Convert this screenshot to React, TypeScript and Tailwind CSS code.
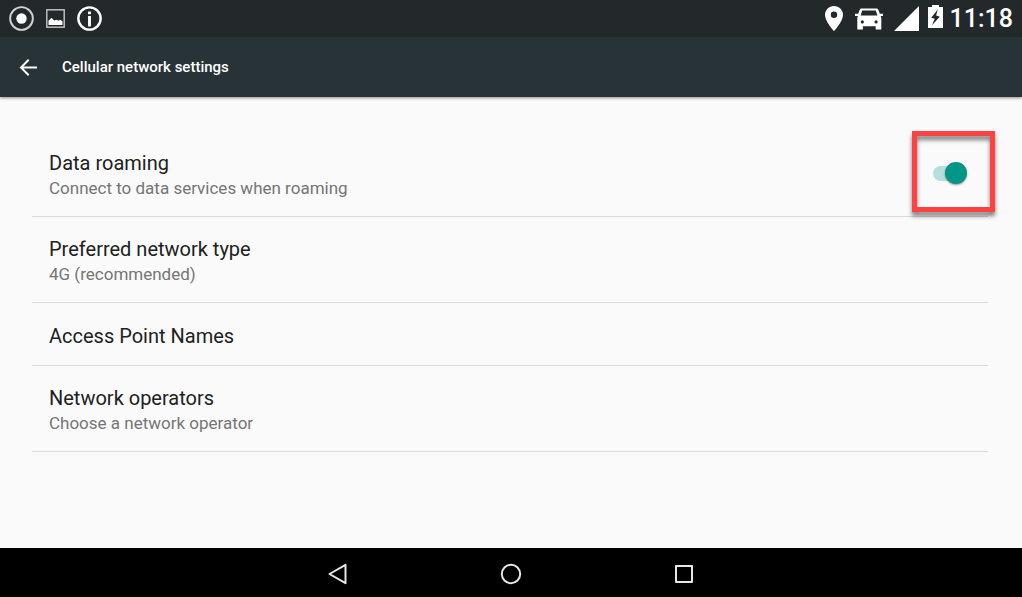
import { useState } from "react";

type Setting = {
  id: string;
  title: string;
  summary?: string;
};

const SETTINGS: Setting[] = [
  { id: "network-type", title: "Preferred network type", summary: "4G (recommended)" },
  { id: "apn", title: "Access Point Names" },
  { id: "operators", title: "Network operators", summary: "Choose a network operator" },
];

function StatusBar() {
  return (
    <div className="flex h-[37px] items-center justify-between bg-[#23282b] pr-[9px] pl-[9px] text-white">
      <div className="flex items-center gap-3">
        <svg viewBox="0 0 26 26" className="size-[25px]" fill="none" aria-hidden="true">
          <circle cx="13" cy="13" r="11.8" stroke="#d0d3d4" strokeWidth="2" />
          <circle cx="13" cy="13" r="5.4" fill="#fff" />
        </svg>
        <svg viewBox="0 0 19 19" className="size-[19px]" fill="none" aria-hidden="true">
          <rect x="0.8" y="0.8" width="17.4" height="17.4" stroke="#c5c8c9" strokeWidth="1.4" />
          <path d="M2.500 16v-4.200l3-3 2.700 2.800 2.500-.9 1.800 1.100 1.500-1 2.500 1.500V16z" fill="#fff" />
        </svg>
        <svg viewBox="0 0 26 26" className="size-[25px]" fill="none" aria-hidden="true">
          <circle cx="13" cy="13" r="11.6" stroke="#fff" strokeWidth="2.5" />
          <path d="M11.500 5.800h3v2.900h-3zM11.500 10.400h3v10.800h-3z" fill="#fff" />
        </svg>
      </div>

      <div className="flex items-center">
        <svg viewBox="0 0 18 25" className="mr-3 h-[25px] w-[18px]" fill="#fff" aria-hidden="true">
          <path
            fillRule="evenodd"
            d="M9 0C4 0 0 3.900 0 8.900 0 15.400 9 25 9 25s9-9.600 9-16.100C18 3.900 14 0 9 0zm0 12a3.200 3.200 0 1 1 0-6.400A3.200 3.200 0 0 1 9 12z"
          />
        </svg>
        <svg viewBox="0 0 28 22" className="mr-[11px] h-[22px] w-7" fill="#fff" aria-hidden="true">
          <path
            fillRule="evenodd"
            d="M6.400.5h15.200c.8 0 1.400.4 1.700 1.200l1.500 4.100H28v2.100h-2.300l.6 2.100v11.500h-5.600v-3.200H7.900v3.200H2.300V10l.6-2.100H0V5.800h3.200l1.500-4.100C5 .9 5.600.5 6.400.5zM7.200 2.600 5.600 7.600h16.800l-1.600-5zM7.300 12.300a1.600 1.600 0 1 0 0 3.200 1.600 1.600 0 0 0 0-3.200zm13.800 0a1.600 1.600 0 1 0 0 3.200 1.600 1.600 0 0 0 0-3.200z"
          />
        </svg>
        <svg viewBox="0 0 25 25" className="mr-[9px] size-[25px]" aria-hidden="true">
          <path d="M25 0v25H0z" fill="#fff" />
        </svg>
        <svg viewBox="0 0 15 23" className="mr-[7px] mb-1 h-[23px] w-[15px]" aria-hidden="true">
          <path d="M4 0h7v2h4v21H0V2h4z" fill="#fff" />
          <path d="M9.800 4.500 3.200 12.700l3.500 1.100-2.700 6.500 7.800-8.600-3.700-1.200z" fill="#23282b" />
        </svg>
        <time className="text-[25px] leading-[37px] font-medium">11:18</time>
      </div>
    </div>
  );
}

function AppBar() {
  return (
    <header className="relative z-10 flex h-[60px] items-center gap-6 bg-[#283337] pl-[19px] text-white shadow-[0_1px_3px_rgba(0,0,0,0.45)]">
      <button type="button" aria-label="Navigate up">
        <svg viewBox="0 0 19 19" className="size-[19px]" fill="none" stroke="#fff" strokeWidth="2" aria-hidden="true">
          <path d="M18 9.500H2.500M9.700 1.800 2 9.500l7.700 7.700" />
        </svg>
      </button>
      <h1 className="text-[15px] leading-5 font-medium">Cellular network settings</h1>
    </header>
  );
}

function SettingText({ title, summary }: Omit<Setting, "id">) {
  return (
    <>
      <span className="block text-xl leading-[26px] text-[#212121]">{title}</span>
      {summary && <span className="block text-[17px] leading-6 text-[#757575]">{summary}</span>}
    </>
  );
}

export default function App() {
  const [roaming, setRoaming] = useState(true);

  return (
    <div className="flex min-h-screen flex-col bg-[#fafafa] font-[Roboto,sans-serif]">
      <StatusBar />
      <AppBar />

      <main className="flex-1 pt-[34px] pr-[34px] pl-8">
        <div className="relative flex items-center justify-between border-b border-[#dadada] pr-5 pl-[17px]">
          <label htmlFor="roaming" className="flex-1 pt-[19px] pb-4">
            <SettingText title="Data roaming" summary="Connect to data services when roaming" />
          </label>
          <input
            id="roaming"
            type="checkbox"
            role="switch"
            checked={roaming}
            onChange={(e) => setRoaming(e.target.checked)}
            className="relative h-[23px] w-[35px] appearance-none before:absolute before:top-1 before:left-0 before:h-[15px] before:w-[30px] before:rounded-full before:bg-[#bdbdbd] after:absolute after:top-0 after:left-0 after:size-[22px] after:rounded-full after:bg-[#f1f1f1] after:shadow-[0_1px_2px_rgba(0,0,0,0.4)] checked:before:bg-[#b5dfda] checked:after:left-3 checked:after:bg-[#009688]"
          />
          {/* Callout around the switch */}
          <div className="pointer-events-none absolute top-0 -right-[7px] h-[81px] w-[83px] border-5 border-[#ff4141] drop-shadow-[0_4px_2px_rgba(0,0,0,0.5)]" />
        </div>

        {SETTINGS.map((s) => (
          <button
            key={s.id}
            type="button"
            className="block min-h-[63px] w-full border-b border-[#dadada] px-[17px] pt-[19px] pb-4 text-left"
          >
            <SettingText title={s.title} summary={s.summary} />
          </button>
        ))}
      </main>

      <nav className="flex h-[49px] items-center justify-center gap-[149px] bg-black pt-[3px]">
        <button type="button" aria-label="Back">
          <svg viewBox="0 0 24 24" className="size-6" fill="none" stroke="#e6e6e6" strokeWidth="2" strokeLinejoin="round" aria-hidden="true">
            <path d="M19.500 2.800v18.400L3.500 12z" />
          </svg>
        </button>
        <button type="button" aria-label="Home">
          <svg viewBox="0 0 24 24" className="size-6" fill="none" stroke="#e6e6e6" strokeWidth="2" aria-hidden="true">
            <circle cx="12" cy="12" r="9.200" />
          </svg>
        </button>
        <button type="button" aria-label="Recent apps">
          <svg viewBox="0 0 24 24" className="size-6" fill="none" stroke="#e6e6e6" strokeWidth="2" strokeLinejoin="round" aria-hidden="true">
            <rect x="4" y="4" width="16" height="16" />
          </svg>
        </button>
      </nav>
    </div>
  );
}
